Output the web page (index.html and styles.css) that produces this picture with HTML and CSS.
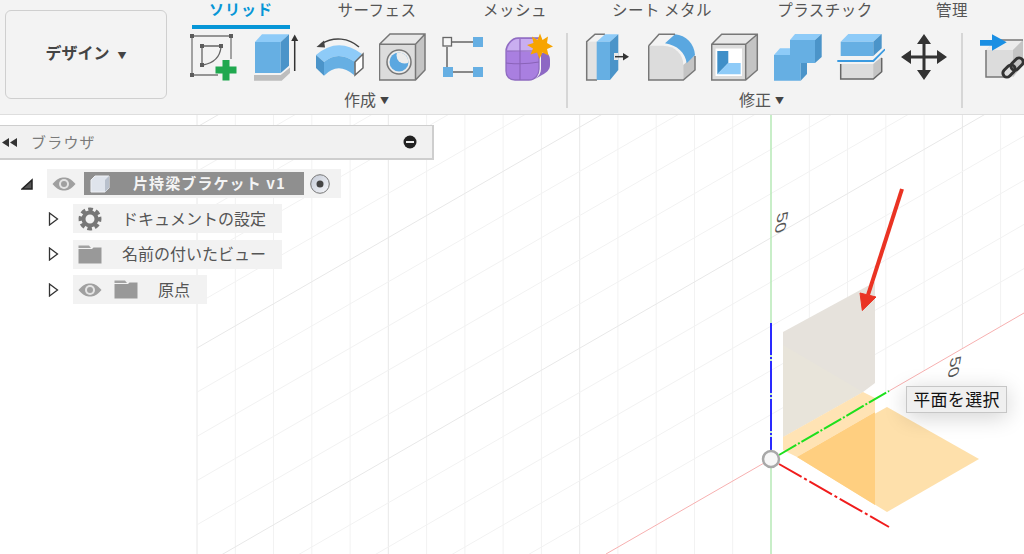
FILE: index.html
```html
<!DOCTYPE html>
<html lang="ja">
<head>
<meta charset="utf-8">
<title>デザイン</title>
<link rel="stylesheet" href="styles.css">
</head>
<body>
<svg class="defs" width="0" height="0" aria-hidden="true">
  <defs>
    <clipPath id="hole-clip"><circle cx="20" cy="29" r="9.500"/></clipPath>
    <linearGradient id="radio-fill" x1="0" y1="0" x2="1" y2="1">
      <stop offset="0" stop-color="#c4cad6"/>
      <stop offset="1" stop-color="#f6f7fa"/>
    </linearGradient>
  </defs>
  <symbol id="eye" viewBox="0 0 24 14">
    <path d="M0.5 7C5 1.5 8.5 0.5 12 0.5S19 1.5 23.5 7C19 12.5 15.500 13.500 12 13.500S5 12.500 0.500 7Z" fill="#a0a0a0"/>
    <circle cx="12" cy="7" r="5" fill="#e4e4e4"/>
    <circle cx="12" cy="7" r="3" fill="#a0a0a0"/>
  </symbol>
  <symbol id="folder" viewBox="0 0 24 19">
    <path d="M0.500 0.500H11L13 3H0.500Z" fill="#a2a2a2"/>
    <path d="M0.500 4H14L15.500 2.500H23.500V18.500H0.500Z" fill="#999"/>
  </symbol>
  <symbol id="twisty" viewBox="0 0 11 14">
    <path d="M1.500 1L9.500 7L1.500 13Z" fill="#fff" stroke="#333" stroke-width="1.300"/>
  </symbol>
</svg>

<header class="toolbar">
  <div class="design-wrap">
    <button class="design">デザイン<span class="caret caret-design">▼</span></button>
  </div>
  <div class="ribbon">
    <nav class="tabs">
      <span class="tab tab-active">ソリッド</span>
      <span class="tab">サーフェス</span>
      <span class="tab">メッシュ</span>
      <span class="tab">シート メタル</span>
      <span class="tab">プラスチック</span>
      <span class="tab">管理</span>
    </nav>
    <div class="tools">
      <section class="group">
        <div class="icons">
          <svg class="tool" viewBox="0 0 48 48">
            <path d="M2 3H41M2 3V42M2 42H28M41 3V26" stroke="#777" stroke-width="1.300" fill="none"/>
            <path d="M12 13H31M12 13V32M31 14C30 24 24 30 13 32" stroke="#666" stroke-width="1.300" fill="none"/>
            <g fill="#5c5c5c">
              <rect x="0" y="1" width="4" height="4"/><rect x="39" y="1" width="4" height="4"/><rect x="0" y="40" width="4" height="4"/>
              <rect x="10" y="11" width="4" height="4"/><rect x="29" y="11" width="4" height="4"/><rect x="10" y="30" width="4" height="4"/>
            </g>
            <path d="M32.500 27H39.500V33.500H46.500V40.500H39.500V47.500H32.500V40.500H25.500V33.500H32.500Z" fill="#1fa84f"/>
          </svg>
          <svg class="tool" viewBox="0 0 48 48">
            <path d="M2 9L9 1.300H36L27.700 9Z" fill="#8ecbf8"/>
            <path d="M2 9H27.700V40H2Z" fill="#66afe3"/>
            <path d="M27.700 9L36 1.300V32.700L27.700 40Z" fill="#4b94c9"/>
            <path d="M1 42H27.700L37 34.500V40L28.700 47.700H1Z" fill="#bdbdbd"/>
            <path d="M41.700 38V4" stroke="#333" stroke-width="1.500"/>
            <path d="M38.200 8L41.700 1.500L45.200 8Z" fill="#333"/>
          </svg>
          <svg class="tool" viewBox="0 0 48 48">
            <path d="M43 14C33 5 18 3 5 11" stroke="#444" stroke-width="1.500" fill="none"/>
            <path d="M0.500 14L8 7.500L9 14.500Z" fill="#444"/>
            <path d="M0 22Q22 3 46 21L39 29Q22 17 8 29Z" fill="#8ecbf8"/>
            <path d="M0 22L8 29V42.700L0 35Z" fill="#4b94c9"/>
            <path d="M8 29Q22 17 39 29L38 42Q22 28 8 42.700Z" fill="#66afe3"/>
            <path d="M39 29L47 21V35L39 42Z" fill="#fff" stroke="#666" stroke-width="1.500"/>
          </svg>
          <svg class="tool" viewBox="0 0 48 48">
            <path d="M0.500 11.300L11 1H46L36.500 11.300Z" fill="#e8e8e8"/>
            <path d="M36.500 11.300L46 1V37L36.500 47Z" fill="#c4c4c4"/>
            <path d="M0.500 11.300H36.500V47H0.500Z" fill="#dcdcdc"/>
            <path d="M0.500 11.300L11 1H46V37L36.500 47H0.500ZM0.500 11.300H36.500V47M36.500 11.300L46 1" fill="none" stroke="#777" stroke-width="1.500"/>
            <circle cx="20" cy="29" r="12" fill="#ececec" stroke="#777" stroke-width="1.500"/>
            <circle cx="20" cy="29" r="9.500" fill="#5aa7e0"/>
            <circle cx="25.500" cy="22.500" r="8" fill="#ececec" clip-path="url(#hole-clip)"/>
          </svg>
          <svg class="tool" viewBox="0 0 48 48">
            <path d="M10 9H31M5 14V34M10 39H31" stroke="#666" stroke-width="1.500" fill="none"/>
            <rect x="1" y="4.500" width="8.500" height="8.500" fill="#f6f6f6" stroke="#666" stroke-width="1.300"/>
            <rect x="31" y="4" width="10" height="10" fill="#66afe3"/>
            <rect x="1" y="34" width="10" height="10" fill="#66afe3"/>
            <rect x="31" y="34" width="10" height="10" fill="#66afe3"/>
          </svg>
          <svg class="tool" viewBox="0 0 48 48">
            <path d="M1 18C1 12 7 5 13 5H34V36C34 42 30 47 24 47H10C4 47 1 43 1 38Z" fill="#a97fe0" stroke="#8e6bc0" stroke-width="1.300"/>
            <path d="M2 18C3 12 7 6 13 6H34V15L27 19Z" fill="#c9aef0"/>
            <path d="M36 20H40C44 20 45 24 45 27V32C45 37 41 40 37 42L30 46C34 43 36 40 36 36Z" fill="#8d68c4"/>
            <path d="M1 30C10 31 24 31 34 29M15 6V47M2 18H30" stroke="#8a63b8" stroke-width="1.100" fill="none"/>
            <path d="M35 0.500L37.500 7L43 3.500L42 10L48 13.500L42 16L43.500 22.500L37.500 19.500L34.500 26L32 19.500L25.500 21.500L28 15.500L22 12L28.500 10L27 3.500L32.500 7Z" fill="#f7a400"/>
          </svg>
        </div>
        <div class="group-label">作成<span class="caret">▼</span></div>
      </section>
      <div class="divider"></div>
      <section class="group">
        <div class="icons">
          <svg class="tool" viewBox="0 0 48 48">
            <path d="M1.700 8.700H12V47H1.700Z" fill="#e2e2e2"/>
            <path d="M12 47H1.700V8.700L10 1.300H20" fill="none" stroke="#777" stroke-width="1.500"/>
            <path d="M11.700 8.700L20 1.300H33.300L25 8.700Z" fill="#8ecbf8"/>
            <path d="M11.700 8.700H25V47H11.700Z" fill="#66afe3"/>
            <path d="M25 8.700L33.300 1.300V37L25 47Z" fill="#4b94c9"/>
            <path d="M29 20H33.300V27H29Z" fill="#e8e8e8"/>
            <path d="M30 23.700H39" stroke="#333" stroke-width="1.500"/>
            <path d="M38 20L44 23.700L38 27.400Z" fill="#333"/>
          </svg>
          <svg class="tool" viewBox="0 0 48 48">
            <path d="M0.700 12.700H15C27 13 35.300 21 35.300 32V47H0.700Z" fill="#dcdcdc"/>
            <path d="M35.300 32L47 22V37L35.300 47Z" fill="#c4c4c4"/>
            <path d="M17 10.300L27 1.300C38 2 46.500 11 47 22L38.700 30.300C37.500 20 29 12 17 10.300Z" fill="#5aa7e0"/>
            <path d="M17 1.300H27M0.700 12.700L11 1.300H18M0.700 12.700V47H35.300L47 37V23" fill="none" stroke="#777" stroke-width="1.500"/>
          </svg>
          <svg class="tool" viewBox="0 0 48 48">
            <path d="M0.700 11.300L10.700 1.300H46.300L34.700 11.300Z" fill="#e8e8e8"/>
            <path d="M34.700 11.300L46.300 1.300V37L34.700 47Z" fill="#c4c4c4"/>
            <path d="M0.700 11.300H34.700V47H0.700Z" fill="#dcdcdc"/>
            <path d="M0.700 11.300L10.700 1.300H46.300V37L34.700 47H0.700ZM0.700 11.300H34.700M34.700 11.300L46.300 1.300M34.700 11.300V47" fill="none" stroke="#777" stroke-width="1.500"/>
            <path d="M4.500 15.500H31V43H4.500Z" fill="#fff"/>
            <path d="M6.300 18H17.300V30L6.300 41.300Z" fill="#3f8fc8"/>
            <path d="M17.300 30H29.700V41.300H6.300Z" fill="#8ecbf8"/>
          </svg>
          <svg class="tool" viewBox="0 0 48 48">
            <path d="M16 7L21 1H47.700L41 7Z" fill="#8ecbf8"/>
            <path d="M16 7H41V30H16Z" fill="#66afe3"/>
            <path d="M41 7L47.700 1V24L41 30Z" fill="#4b94c9"/>
            <path d="M0 22L6 15.300H16V22Z" fill="#8ecbf8"/>
            <path d="M0 22H16V30H26.700V47.700H0Z" fill="#66afe3"/>
            <path d="M26.700 30H33V41L26.700 47.700Z" fill="#4b94c9"/>
          </svg>
          <svg class="tool" viewBox="0 0 48 48">
            <path d="M3.700 8.700L11.300 1H44.700L36.300 8.700Z" fill="#8ecbf8"/>
            <path d="M3.700 8.700H36.300V23H3.700Z" fill="#66afe3"/>
            <path d="M36.300 8.700L44.700 1V15.300L36.300 23Z" fill="#4b94c9"/>
            <path d="M3.700 31H36.300L44.700 24V38.700L36.300 46H3.700Z" fill="#dcdcdc"/>
            <path d="M36.300 31L44.700 24V38.700L36.300 46Z" fill="#c4c4c4"/>
            <path d="M3.700 31V46H36.300L44.700 38.700V25" fill="none" stroke="#666" stroke-width="1.500"/>
            <path d="M0.300 28H36.300L48 16.300" fill="none" stroke="#3a9ae0" stroke-width="1.800"/>
          </svg>
          <svg class="tool" viewBox="0 0 48 48">
            <path d="M24 6V42M6 24H42" stroke="#333" stroke-width="3"/>
            <path d="M24 1L31 11H17ZM24 47L31 37H17ZM1 24L11 17V31ZM47 24L37 17V31Z" fill="#333"/>
          </svg>
        </div>
        <div class="group-label">修正<span class="caret">▼</span></div>
      </section>
      <div class="divider"></div>
      <section class="group">
        <div class="icons">
          <svg class="tool" viewBox="0 0 48 48">
            <path d="M6 17L16 7H43V32L33 44H6Z" fill="#dcdcdc"/>
            <path d="M16 7H43L33 17H6Z" fill="#ececec"/>
            <path d="M33 17L43 7V32L33 44Z" fill="#c4c4c4"/>
            <path d="M6 17V44H26M18 7H43" fill="none" stroke="#777" stroke-width="1.500"/>
            <path d="M0 7H12V1.300L26.700 9.300L12 17.700V12.700H0Z" fill="#1a8fe3"/>
            <g fill="none" stroke="#333" stroke-width="3">
              <rect x="22" y="34" width="14" height="8" rx="4" transform="rotate(-45 29 38)"/>
              <rect x="30" y="27" width="14" height="8" rx="4" transform="rotate(-45 37 31)"/>
            </g>
          </svg>
        </div>
      </section>
    </div>
  </div>
</header>

<main class="viewport">
  <svg class="scene" viewBox="0 115 1024 439" aria-hidden="true">
    <path class="grid-minor" d="M235.300 115V554M273.500 115V554M311.800 115V554M350.100 115V554M426.600 115V554M464.900 115V554M503.100 115V554M541.400 115V554M617.900 115V554M656.200 115V554M694.500 115V554M732.700 115V554M809.300 115V437M847.500 115V415M885.800 115V393M924.100 115V371M1000.600 115V327"/>
    <path class="grid-major" d="M197 115V554M388.300 115V554M579.700 115V554M962.400 115V349"/>
    <path class="grid-minor" d="M197 745.800L1024 268.600M197 701.600L1024 224.400M197 657.400L1024 180.200M197 613.200L1024 136M197 524.800L1024 47.600M197 480.600L1024 3.400M197 436.400L1024 -40.800M197 392.200L1024 -85M197 303.800L1024 -173.400M197 259.600L1024 -217.600M197 215.400L1024 -261.800M197 171.200L1024 -306"/>
    <path class="grid-major" d="M197 569L1024 91.800M197 348L1024 -129.200M197 127L1024 -350"/>
    <path d="M771 115V554" stroke="#b6e8b6" stroke-width="1.500" fill="none"/>
    <path d="M606 554L771 459M889 391L1024 313" stroke="#f7b0b0" stroke-width="1" fill="none"/>

    <path d="M783 332L875 282V383L863 392L783 437Z" fill="#e6e2dc"/>
    <path d="M783 345L863 392L783 437Z" fill="#e8e4da"/>
    <path d="M783 437L863 392L875 398V412L797 457L783 450Z" fill="#ffe3b4"/>
    <path d="M797 457L887 407L979 459L887 512Z" fill="#fee0ab"/>
    <path d="M797 457L875 412V505Z" fill="#ffcf80"/>

    <path d="M771 323V450" stroke="#2a2aff" stroke-width="2" stroke-dasharray="32 2 2 2" fill="none"/>
    <path d="M779 455L889 391" stroke="#1de01d" stroke-width="2" stroke-dasharray="20 2 2 2" fill="none"/>
    <path d="M779 464L889 527" stroke="#f01c1c" stroke-width="2" stroke-dasharray="26 3 3 3" fill="none"/>
    <circle cx="771" cy="459" r="8" fill="#f7f7f7" stroke="#a8a8a8" stroke-width="2.500"/>

    <text class="num" transform="matrix(-0.2 1.25 -1 0.3 778 213.500)">50</text>
    <text class="num" transform="matrix(-0.2 1.25 -1 0.3 951 358)">50</text>

    <path d="M902 189L868 295" stroke="#ea3323" stroke-width="4" fill="none"/>
    <path d="M860 293L876 297L862.300 310.500Z" fill="#ea3323" stroke="#ea3323" stroke-width="1"/>
  </svg>

  <aside class="browser">
    <div class="browser-head">
      <svg class="collapse" viewBox="0 0 15 9"><path d="M7 0V9L0 4.500ZM15 0V9L8 4.500Z" fill="#333"/></svg>
      <span class="browser-title">ブラウザ</span>
      <svg class="minus" viewBox="0 0 14 14"><circle cx="7" cy="7" r="6.500" fill="#222"/><rect x="3" y="6" width="8" height="2" fill="#eee"/></svg>
    </div>
    <ul class="tree">
      <li class="tree-line tree-line-root">
        <svg class="open-mark" viewBox="0 0 12 12"><path d="M1 11L11 2V11Z" fill="#555" stroke="#222" stroke-width="1.500"/></svg>
        <div class="row row-root">
          <svg class="ico-eye"><use href="#eye"/></svg>
          <div class="name-dark">
            <svg class="cube" viewBox="0 0 20 18">
              <path d="M1 5L5 1H19V13L15 17H1Z" fill="#dfe4ec" stroke="#eef0f4"/>
              <path d="M15 5L19 1V13L15 17Z" fill="#b8c0cc"/>
            </svg>
            <span class="name-text">片持梁ブラケット v1</span>
          </div>
          <svg class="radio" viewBox="0 0 20 20">
            <circle cx="10" cy="10" r="9.300" fill="url(#radio-fill)" stroke="#777"/>
            <circle cx="10" cy="10" r="3.500" fill="#444"/>
          </svg>
        </div>
      </li>
      <li class="tree-line">
        <svg class="twist"><use href="#twisty"/></svg>
        <div class="row row-wide">
          <svg class="gear" viewBox="0 0 24 24">
            <circle cx="12" cy="12" r="9.500" fill="none" stroke="#777" stroke-width="4" stroke-dasharray="4.500 2.960" transform="rotate(-12 12 12)"/>
            <circle cx="12" cy="12" r="6.500" fill="none" stroke="#777" stroke-width="4"/>
          </svg>
          <span class="label">ドキュメントの設定</span>
        </div>
      </li>
      <li class="tree-line">
        <svg class="twist"><use href="#twisty"/></svg>
        <div class="row row-wide">
          <svg class="ico-folder"><use href="#folder"/></svg>
          <span class="label">名前の付いたビュー</span>
        </div>
      </li>
      <li class="tree-line">
        <svg class="twist"><use href="#twisty"/></svg>
        <div class="row row-short">
          <svg class="ico-eye"><use href="#eye"/></svg>
          <svg class="ico-folder ico-folder-after"><use href="#folder"/></svg>
          <span class="label">原点</span>
        </div>
      </li>
    </ul>
  </aside>

  <div class="tooltip">平面を選択</div>
</main>
</body>
</html>
```

FILE: styles.css
```css
* { box-sizing: border-box; }
html, body { margin: 0; padding: 0; }
body {
  width: 1024px;
  height: 554px;
  overflow: hidden;
  display: flex;
  flex-direction: column;
  background: #fff;
  font-family: "Noto Sans CJK JP", "Noto Sans", sans-serif;
  color: #555;
}
.defs { position: absolute; }

.toolbar {
  flex: 0 0 115px;
  display: flex;
  background: #f3f3f3;
  border-bottom: 1px solid #dedede;
}
.design-wrap { flex: 0 0 190px; padding: 10px 0 0 5px; }
.design {
  width: 162px;
  height: 89px;
  background: #f3f3f3;
  border: 1px solid #cfcfcf;
  border-radius: 6px;
  font: bold 16px "Noto Sans CJK JP", sans-serif;
  color: #444;
  padding: 0 0 6px;
}
.caret { font-size: 9px; margin-left: 4px; color: #444; vertical-align: 2px; }
.caret-design { margin-left: 8px; vertical-align: 0; }

.ribbon { flex: 1; min-width: 0; display: flex; flex-direction: column; }
.tabs {
  display: grid;
  grid-template-columns: 100px 174px 102px 192px 134px 120px;
  height: 33px;
}
.tab {
  height: 29px;
  text-align: center;
  font-size: 15.500px;
  line-height: 18px;
  letter-spacing: 0.500px;
  color: #555;
}
.tab-active {
  margin-left: 2px;
  font-size: 15px;
  font-weight: bold;
  color: #0696d7;
  letter-spacing: 1px;
  border-bottom: 4px solid #0696d7;
}
.tools { display: flex; }
.group { flex: 0 0 auto; display: flex; flex-direction: column; align-items: center; }
.icons { display: flex; gap: 15px; }
.tool { width: 48px; height: 48px; display: block; flex: none; }
.group-label { font-size: 16px; line-height: 20px; margin: 8px 10px 0 0; color: #555; }
.divider { flex: none; width: 2px; height: 75px; margin: 0 17px 0 13px; background: #d6d6d6; }

.viewport { flex: 1; position: relative; min-height: 0; overflow: hidden; }
.scene { position: absolute; inset: 0; width: 1024px; height: 439px; display: block; }
.grid-minor { fill: none; stroke: #f2f2f2; stroke-width: 1; }
.grid-major { fill: none; stroke: #e8e8e8; stroke-width: 1; }
.num { font: 15px "Liberation Sans", sans-serif; fill: #555; }

.browser { position: relative; margin: 10px 0 0 -1px; width: 435px; }
.browser-head {
  height: 35px;
  display: flex;
  align-items: center;
  background: #f1f1f1;
  border: 1px solid #cecece;
  border-width: 1px 2px 2px 0;
  padding: 0 15px 2px 3px;
}
.collapse { width: 15px; height: 9px; flex: none; margin-top: 2px; }
.browser-title { margin-left: 14px; font-size: 15px; letter-spacing: 1.200px; color: #7a7a7a; flex: 1; }
.minus { width: 14px; height: 14px; flex: none; margin-top: 2px; }

.tree { list-style: none; margin: 9px 0 0; padding: 0; display: flex; flex-direction: column; gap: 6.400px; }
.tree-line { display: flex; align-items: center; padding-left: 49px; }
.tree-line-root { padding-left: 22px; }
.open-mark { width: 12px; height: 12px; flex: none; margin-right: 14px; }
.twist { width: 11px; height: 14px; flex: none; margin-right: 14px; }
.row { display: flex; align-items: center; height: 29px; background: #f2f2f2; padding-left: 5px; }
.row-root { width: 294px; }
.row-wide { width: 209px; }
.row-short { width: 134px; }
.ico-eye { width: 24px; height: 14px; flex: none; }
.ico-folder { width: 24px; height: 19px; flex: none; }
.ico-folder-after { margin-left: 12px; }
.gear { width: 24px; height: 24px; flex: none; }
.name-dark {
  margin-left: 8px;
  width: 220px;
  height: 23px;
  background: #8f8f8f;
  display: flex;
  align-items: center;
  padding-left: 6px;
}
.cube { width: 20px; height: 18px; flex: none; }
.name-text { margin: -2px 0 0 23px; font-size: 15px; font-weight: bold; letter-spacing: 1.100px; color: #f4f4f4; white-space: nowrap; }
.radio { width: 20px; height: 20px; margin-left: 6px; flex: none; }
.label { margin: -2px 0 0 20px; font-size: 16px; color: #555; white-space: nowrap; }

.tooltip {
  position: absolute;
  left: 906px;
  top: 271px;
  width: 101px;
  height: 27px;
  background: #efefef;
  border: 1px solid #c6c6c6;
  box-shadow: 0 4px 22px rgba(0, 0, 0, 0.18);
  font-size: 17px;
  line-height: 24px;
  letter-spacing: 0.300px;
  text-align: center;
  color: #111;
}
```
